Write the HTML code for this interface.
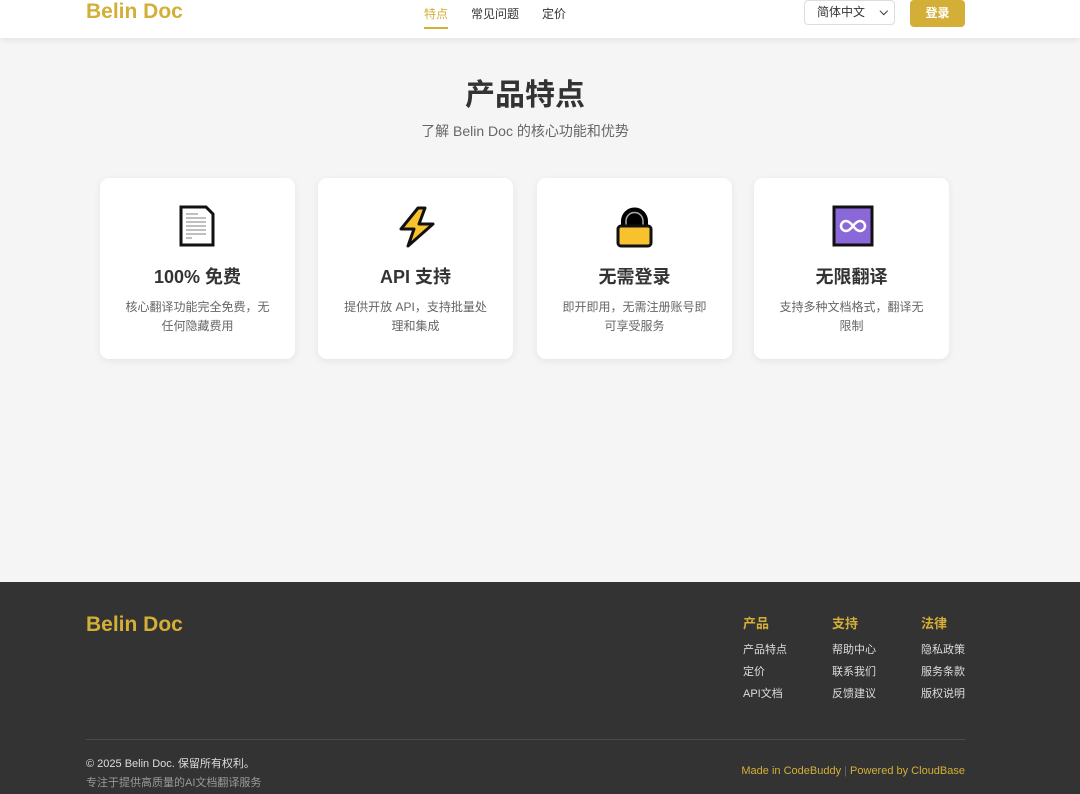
<!DOCTYPE html>
<html><head><meta charset="utf-8"><style>
*{margin:0;padding:0;box-sizing:border-box}
body{width:1080px;height:794px;overflow:hidden;background:#f5f5f5;font-family:"Liberation Sans","Noto Sans CJK SC",sans-serif;color:#333;position:relative}
.hd{position:absolute;top:0;left:0;width:1080px;height:38px;background:#fff;box-shadow:0 2px 6px rgba(0,0,0,.08)}
.logo{position:absolute;left:86px;top:0;font-size:21px;font-weight:bold;color:#d4af37;line-height:24px}
.nav{position:absolute;top:5px;font-size:12px;color:#333}
.nav.a{color:#d4af37;border-bottom:2px solid #d4af37;padding-bottom:5px}
.sel{position:absolute;left:804px;top:0;width:91px;height:25px;border:1px solid #ddd;border-radius:4px;font-size:12px;line-height:23px;padding-left:12px;background:#fff}
.sel span{position:absolute;right:6px;top:0;font-size:11px;font-weight:bold}
.btn{position:absolute;left:910px;top:0;width:55px;height:27px;background:#d4af37;border-radius:4px;color:#fff;font-size:12px;font-weight:bold;text-align:center;line-height:27px}
h1{position:absolute;top:70px;left:0;width:1050px;text-align:center;font-size:30px;font-weight:bold;color:#333}
.sub{position:absolute;top:121px;left:0;width:1050px;text-align:center;font-size:14px;color:#666}
.card{position:absolute;top:178px;width:195px;height:181px;background:#fff;border-radius:9px;box-shadow:0 2px 8px rgba(0,0,0,.07);text-align:center}
.card svg{position:absolute;left:78px;top:27px}
.card h3{position:absolute;top:85px;width:100%;font-size:18px;font-weight:bold;color:#333}
.card p{position:absolute;top:120px;left:22px;right:22px;font-size:12px;line-height:19px;color:#666}
.ft{position:absolute;top:582px;left:0;width:1080px;height:212px;background:#333}
.fl{position:absolute;left:86px;top:31px;font-size:21px;font-weight:bold;color:#d4af37}
.col{position:absolute;top:31px;font-size:11px;color:#ddd}
.col b{display:block;color:#d4af37;font-size:13px;margin-bottom:9px}
.col div{height:22px}
.line{position:absolute;left:86px;top:157px;width:879px;height:1px;background:#4a4a4a}
.cp{position:absolute;left:86px;top:173px;font-size:11px;color:#ddd}
.cp2{position:absolute;left:86px;top:192px;font-size:11px;color:#999}
.mk{position:absolute;right:115px;top:183px;font-size:11px;color:#d4af37}
</style></head><body>
<div class="hd">
<div class="logo">Belin Doc</div>
<div class="nav a" style="left:424px">特点</div>
<div class="nav" style="left:471px">常见问题</div>
<div class="nav" style="left:542px">定价</div>
<div class="sel">简体中文<span>&#x2335;</span></div>
<div class="btn">登录</div>
</div>
<h1>产品特点</h1>
<div class="sub">了解 Belin Doc 的核心功能和优势</div>

<div class="card" style="left:100px">
<svg width="40" height="42" viewBox="0 0 40 42"><path d="M3 2h25l7 7v31H3z" fill="#fff" stroke="#111" stroke-width="3"/><g stroke="#aaa" stroke-width="1.5"><path d="M8 9h12M8 13h20M8 17h20M8 21h20M8 25h20M8 29h20M8 33h6"/></g></svg>
<h3>100% 免费</h3><p>核心翻译功能完全免费，无任何隐藏费用</p></div>

<div class="card" style="left:318px">
<svg width="42" height="44" viewBox="0 0 42 44"><path d="M22 3 5 24h13l-6 17 25-22H23l6-16z" fill="#f7c22e" stroke="#111" stroke-width="3" stroke-linejoin="round"/></svg>
<h3>API 支持</h3><p>提供开放 API，支持批量处理和集成</p></div>

<div class="card" style="left:537px">
<svg width="40" height="44" viewBox="0 0 40 44"><path d="M6 24V16a13.5 13.5 0 0 1 27 0v8z" fill="#000"/><path d="M11 24V16a8.5 8.5 0 0 1 17 0v8" fill="none" stroke="#aaa" stroke-width="1.5"/><rect x="3" y="21" width="33" height="20" rx="3" fill="#f7c22e" stroke="#111" stroke-width="3"/></svg>
<h3>无需登录</h3><p>即开即用，无需注册账号即可享受服务</p></div>

<div class="card" style="left:754px">
<svg width="42" height="42" viewBox="0 0 42 42"><rect x="2" y="2" width="38" height="38" fill="#8b68d9" stroke="#111" stroke-width="3"/><path d="M21 21c-3-4-5-5-7-5a5 5 0 0 0 0 10c2 0 4-1 7-5s5-5 7-5a5 5 0 0 1 0 10c-2 0-4-1-7-5z" fill="none" stroke="#fff" stroke-width="2.5"/></svg>
<h3>无限翻译</h3><p>支持多种文档格式，翻译无限制</p></div>

<div class="ft">
<div class="fl">Belin Doc</div>
<div class="col" style="left:743px"><b>产品</b><div>产品特点</div><div>定价</div><div>API文档</div></div>
<div class="col" style="left:832px"><b>支持</b><div>帮助中心</div><div>联系我们</div><div>反馈建议</div></div>
<div class="col" style="left:921px"><b>法律</b><div>隐私政策</div><div>服务条款</div><div>版权说明</div></div>
<div class="line"></div>
<div class="cp">© 2025 Belin Doc. 保留所有权利。</div>
<div class="cp2">专注于提供高质量的AI文档翻译服务</div>
<div class="mk">Made in CodeBuddy <span style="color:#666">|</span> Powered by CloudBase</div>
</div>
</body></html>
